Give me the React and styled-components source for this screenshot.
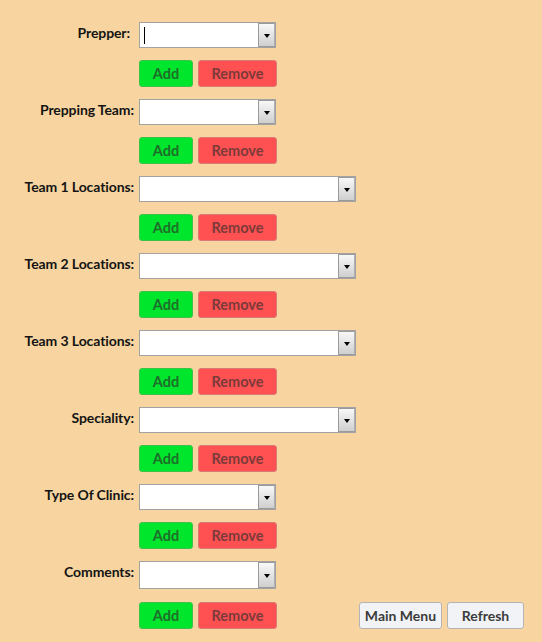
import React from "react";
import styled, { createGlobalStyle } from "styled-components";

const Global = createGlobalStyle`
  html, body { margin: 0; padding: 0; background: #f8d5a0; }
  body { font-family: Lato, "Liberation Sans", sans-serif; }
`;

const Page = styled.div`
  width: 542px;
  height: 642px;
  background: #f8d5a0;
  padding-top: 22px;
  box-sizing: border-box;
`;

const Section = styled.div`
  display: grid;
  grid-template-columns: 134px auto;
  column-gap: 5px;
  row-gap: ${(p) => (p.$last ? 13 : 12)}px;
  margin-bottom: 12px;
`;

const Label = styled.div`
  text-align: right;
  font-weight: 700;
  font-size: 14px;
  letter-spacing: -0.1px;
  color: #141414;
  padding-top: 2px;
  padding-right: ${(p) => p.$inset || 0}px;
  white-space: nowrap;
  line-height: 18px;
`;

const Combo = styled.div`
  position: relative;
  width: ${(p) => (p.$wide ? 217 : 137)}px;
  height: ${(p) => (p.$tall ? 28 : 26)}px;
  box-sizing: border-box;
  background: #ffffff;
  border: 1px solid #a2a2a2;
  display: flex;
  align-items: center;
`;

const Caret = styled.span`
  width: 1px;
  height: 17px;
  margin-left: 4px;
  background: #000;
`;

const DropButton = styled.div`
  position: absolute;
  right: 0;
  top: 0;
  bottom: 0;
  width: 17px;
  box-sizing: border-box;
  border: 1px solid #9a9a9a;
  border-right-color: #b0b0b0;
  background: linear-gradient(#f8f8f8, #cfcfcf);
  display: flex;
  align-items: center;
  justify-content: center;
`;

const Arrow = styled.span`
  width: 0;
  height: 0;
  margin-top: 2px;
  border-left: 3.5px solid transparent;
  border-right: 3.5px solid transparent;
  border-top: 4px solid #000;
`;

const ButtonRow = styled.div`
  grid-column: 2;
  display: flex;
  gap: 5px;
  align-items: center;
`;

const Action = styled.button`
  height: 27px;
  width: ${(p) => (p.$kind === "add" ? 54 : 79)}px;
  box-sizing: border-box;
  border-radius: 3px;
  border: 1px solid ${(p) => (p.$kind === "add" ? "#3cc24a" : "#d97a78")};
  background: ${(p) => (p.$kind === "add" ? "#00e62c" : "#ff5151")};
  color: ${(p) => (p.$kind === "add" ? "#1f6e2a" : "#7c3a3a")};
  font-family: Lato, "Liberation Sans", sans-serif;
  font-weight: 700;
  font-size: 14.5px;
  padding: 0;
  cursor: pointer;
`;

const NavGroup = styled.div`
  display: flex;
  gap: 5px;
  margin-left: 77px;
`;

const NavButton = styled.button`
  height: 27px;
  width: ${(p) => p.$w}px;
  box-sizing: border-box;
  border-radius: 3px;
  border: 1px solid #b4b4b4;
  background: #f1f3f6;
  color: #3c3c3c;
  font-family: Lato, "Liberation Sans", sans-serif;
  font-weight: 700;
  font-size: 14px;
  padding: 0;
`;

const fields = [
  { label: "Prepper:", wide: false, caret: true, inset: 4 },
  { label: "Prepping Team:", wide: false },
  { label: "Team 1 Locations:", wide: true },
  { label: "Team 2 Locations:", wide: true },
  { label: "Team 3 Locations:", wide: true },
  { label: "Speciality:", wide: true },
  { label: "Type Of Clinic:", wide: false },
  { label: "Comments:", wide: false, last: true },
];

export default function App() {
  return (
    <>
      <Global />
      <Page>
        {fields.map((f) => (
          <Section key={f.label} $last={f.last}>
            <Label $inset={f.inset}>{f.label}</Label>
            <Combo $wide={f.wide} $tall={f.last}>
              {f.caret && <Caret />}
              <DropButton>
                <Arrow />
              </DropButton>
            </Combo>
            <ButtonRow>
              <Action $kind="add">Add</Action>
              <Action $kind="remove">Remove</Action>
              {f.last && (
                <NavGroup>
                  <NavButton $w={83}>Main Menu</NavButton>
                  <NavButton $w={77}>Refresh</NavButton>
                </NavGroup>
              )}
            </ButtonRow>
          </Section>
        ))}
      </Page>
    </>
  );
}
